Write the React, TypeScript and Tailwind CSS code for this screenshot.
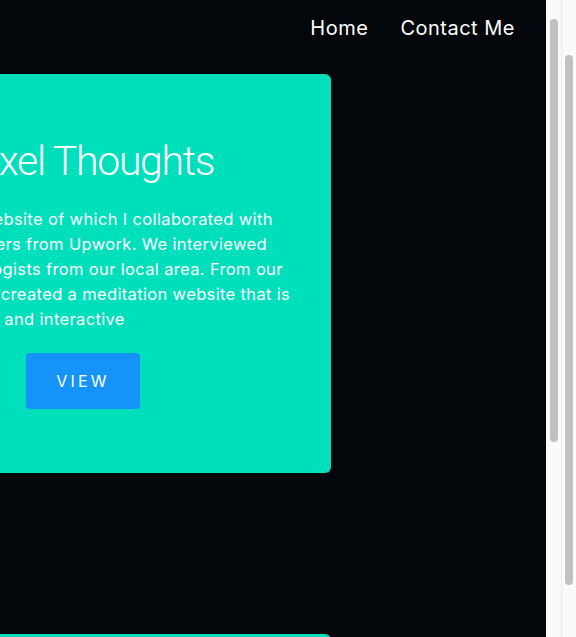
import React from 'react';

const projects = [
  {
    title: 'Pixel Thoughts',
    lines: [
      'It is a Website of which I collaborated with',
      'freelancers from Upwork. We interviewed',
      'psychologists from our local area. From our',
      'talks we created a meditation website that is',
      'soothing and interactive',
    ],
  },
  {
    title: 'Second Project',
    lines: ['A small project card'],
  },
];

const ProjectCard: React.FC<{ title: string; lines: string[] }> = ({ title, lines }) => (
  <div className="-ml-[84px] w-[415px] shrink-0 rounded-md bg-[#00dfbc] px-4 pt-[67px] pb-16 text-white">
    <h2 className="ml-[35px] whitespace-nowrap font-['Roboto',sans-serif] text-[41px] leading-none font-light tracking-[-1.3px]">
      {title}
    </h2>
    <p className="mt-[25px] -ml-[3px] whitespace-nowrap text-[16.5px] leading-[25px] tracking-[0.35px]">
      {lines.map((line, i) => (
        <React.Fragment key={i}>
          {line}
          {i < lines.length - 1 && <br />}
        </React.Fragment>
      ))}
    </p>
    <button className="mt-[21px] ml-[94px] h-14 w-[114px] rounded bg-[#1593f9] text-base tracking-[0.2em] text-white">
      VIEW
    </button>
  </div>
);

// browser-style scrollbar track
const Scrollbar: React.FC<{ top: string; size: string; track: string }> = ({ top, size, track }) => (
  <div className={`flex justify-center bg-[#fafafa] ${track}`}>
    <div className={`w-2 rounded-full bg-[#c1c1c1] ${top} ${size}`} />
  </div>
);

const App: React.FC = () => {
  return (
    <div className="flex h-[637px] overflow-hidden bg-[#03060a] font-['Inter',sans-serif]">
      <main className="w-[546px] shrink-0 overflow-hidden">
        {/* Nav */}
        <nav className="flex h-14 items-center justify-end gap-8 pr-[31px] text-xl tracking-[0.5px] text-white">
          <a href="#home">Home</a>
          <a href="#contact">Contact Me</a>
        </nav>

        {/* Projects */}
        <div className="flex flex-col gap-[161px] pt-[18px]">
          {projects.map((p) => (
            <ProjectCard key={p.title} title={p.title} lines={p.lines} />
          ))}
        </div>
      </main>

      <Scrollbar track="w-[16px] border-r border-[#e9e9e9]" top="mt-[19px]" size="h-[423px]" />
      <Scrollbar track="w-[14px]" top="mt-[55px]" size="h-[530px]" />
    </div>
  );
};

export default App;
